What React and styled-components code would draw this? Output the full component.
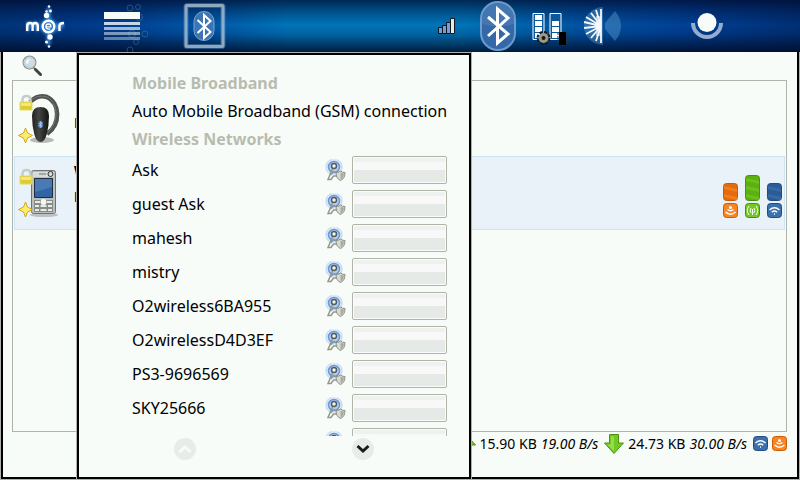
import { useState } from 'react';
import styled, { createGlobalStyle } from 'styled-components';

const GlobalStyle = createGlobalStyle`
  * {
    box-sizing: border-box;
  }
  body {
    margin: 0;
    background: #f8fcf8;
    color: #000;
    font-family: 'Noto Sans', 'Open Sans', sans-serif;
    font-size: 16px;
  }
  svg {
    display: block;
    flex: none;
  }
`;

const Screen = styled.div`
  display: flex;
  flex-direction: column;
  height: 100vh;
  overflow: hidden;
`;

const Toolbar = styled.header`
  display: flex;
  align-items: center;
  gap: 39px;
  height: 52px;
  flex: none;
  padding: 0 53px 0 5px;
  background:
    linear-gradient(
      rgba(0, 8, 40, 0.7),
      rgba(0, 12, 48, 0.3) 25%,
      transparent 48%,
      rgba(0, 12, 48, 0.15) 65%,
      rgba(0, 8, 32, 0.8)
    ),
    linear-gradient(
      90deg,
      #003478,
      #003e90 14%,
      #0058a8 26%,
      #0074b8 36%,
      #0074b8 58%,
      #0054a4 72%,
      #004094 86%,
      #003074
    );
`;

const ToolGroup = styled.nav`
  display: flex;
  margin-left: ${({ $end }) => ($end ? 'auto' : '0')};
`;

const ToolButton = styled.button`
  display: flex;
  align-items: center;
  justify-content: center;
  width: ${({ $wide }) => ($wide ? '80px' : '52px')};
  height: 52px;
  padding: 0;
  border: 0;
  background: none;
`;

const Desktop = styled.div`
  position: relative;
  display: flex;
  flex: 1;
  min-height: 0;
  padding: 0 1px 1px;
  background: #b0b0b0;
`;

const Window = styled.main`
  display: flex;
  flex-direction: column;
  flex: 1;
  min-width: 0;
  padding: 0 10px 0 9px;
  border: solid #000;
  border-width: 0 2px 2px;
  background: #f8fcf8;
`;

const SearchButton = styled.button`
  align-self: flex-start;
  height: 28px;
  padding: 2px 10px;
  border: 0;
  background: none;
`;

const DeviceList = styled.ul`
  flex: 1;
  min-height: 0;
  margin: 0;
  padding: 1px;
  border: 1px solid #b0b4a8;
  list-style: none;
`;

const Device = styled.li`
  display: flex;
  align-items: center;
  height: 74px;
  padding: 0 2px 0 3px;
  border: 1px solid ${({ $selected }) => ($selected ? '#cce4f4' : 'transparent')};
  background: ${({ $selected }) => ($selected ? '#e8f2f8' : 'none')};
`;

const DeviceText = styled.div`
  flex: 1;
  padding: 0 0 18px 12px;
  font-size: 14px;
  font-weight: bold;
  line-height: 26px;

  p {
    height: 26px;
    margin: 0;
  }
`;

const Meters = styled.div`
  display: flex;
  align-items: flex-end;
  gap: 7px;
  padding-top: 6px;
`;

const Meter = styled.div`
  display: flex;
  flex-direction: column;
  align-items: center;
  gap: 2px;
`;

const StatusBar = styled.footer`
  display: flex;
  align-items: center;
  justify-content: flex-end;
  gap: 4px;
  height: 45px;
  padding-bottom: 22px;
  flex: none;
  font-size: 14px;
  white-space: nowrap;

  em {
    margin-right: 2px;
  }
`;

const Panel = styled.section`
  position: absolute;
  top: 1px;
  bottom: 1px;
  left: 77px;
  display: flex;
  flex-direction: column;
  width: 394px;
  border: 2px solid #000;
  box-shadow: 0 0 0 1px #b0b0b0;
  background: #f8fcf8;
`;

const PanelBody = styled.div`
  flex: 1;
  min-height: 0;
  padding: 14px 22px 0 53px;
  overflow: hidden;
`;

const PanelTitle = styled.h2`
  margin: 0;
  color: #b8bcb0;
  font-size: 16px;
  line-height: 28px;
`;

const Connection = styled.p`
  margin: 0;
  line-height: 28px;
  white-space: nowrap;
`;

const Network = styled.div`
  display: flex;
  align-items: center;
  gap: 6px;
  height: 34px;

  label {
    flex: 1;
  }
`;

const NetworkButton = styled.button`
  width: 95px;
  height: 28px;
  padding: 0;
  border: 1px solid #b0b4a8;
  border-radius: 2px;
  background: linear-gradient(
    #eef2ee 5px,
    #f8f8f8 5px,
    #f8f8f8 13px,
    #e6eae6 13px
  );
  box-shadow: inset 0 0 0 1px #fcfcfc;
`;

const Pager = styled.div`
  display: grid;
  grid-template-columns: 1fr 1fr;
  justify-items: center;
  height: 41px;
  padding: 2px 17px 0;
  flex: none;
`;

const PagerButton = styled.button`
  display: flex;
  align-items: center;
  justify-content: center;
  width: 22px;
  height: 22px;
  padding: 0;
  border: 0;
  border-radius: 50%;
  background: #e8ece8;
`;

const MerLogo = () => (
  <svg width="40" height="48" viewBox="0 0 40 48" fill="none" stroke="#fff">
    <defs>
      <filter id="glow" x="-50%" y="-50%" width="200%" height="200%">
        <feGaussianBlur stdDeviation="1.5" />
      </filter>
    </defs>
    <g filter="url(#glow)" stroke="#4ca4f4" strokeWidth="4" opacity="0.8">
      <path d="M3 29v-7h9v7M34 29v-6h5M23.500 6v37" />
      <circle cx="23.500" cy="24.500" r="6" />
    </g>
    <g strokeWidth="2.400">
      <path d="M2.200 29v-5q0-3 2.800-3t2.600 3v5M7.600 24q0-3 2.600-3t2.600 3v5" />
      <circle cx="23.500" cy="24.500" r="5.800" />
      <path d="M21 24.800h5q0-2.800-2.500-2.800t-2.700 2.700q0 2.800 4.500 2.300" strokeWidth="1.300" />
      <path d="M34.500 29v-5q0-3 4.500-3" />
    </g>
    <g fill="#fff" stroke="none">
      <circle cx="24" cy="4.500" r="1.300" />
      <circle cx="25.500" cy="9" r="1.400" />
      <circle cx="21.500" cy="9.500" r="1.200" />
      <circle cx="21.500" cy="13.500" r="2.700" />
      <circle cx="25" cy="35" r="2.700" />
      <circle cx="21.500" cy="40" r="1.500" />
      <circle cx="24" cy="44.500" r="1.300" />
    </g>
  </svg>
);

const BubbleMenu = () => (
  <svg width="52" height="52" viewBox="0 0 52 52">
    <g fill="none" stroke="#6c8c98" opacity="0.4">
      <circle cx="31" cy="8" r="3" />
      <circle cx="39" cy="7" r="2.500" />
      <circle cx="40" cy="17" r="3.500" />
      <circle cx="33" cy="34" r="3.500" />
      <circle cx="46" cy="34" r="3" />
      <circle cx="37" cy="42" r="2.500" />
      <circle cx="31" cy="50" r="3" />
    </g>
    <g fill="#f8fcf8">
      <path d="M5 12h36v7H5z" />
      <path d="M5 22h36v3H5z" opacity="0.8" />
      <path d="M5 27h36v3H5z" opacity="0.65" />
      <path d="M5 32h36v3H5z" opacity="0.5" />
      <path d="M5 37h36v3H5z" opacity="0.4" />
    </g>
  </svg>
);

const BluetoothFrame = () => (
  <svg width="44" height="48" viewBox="0 0 44 48" fill="none">
    <rect x="3" y="3.500" width="37" height="41" rx="1" stroke="#6ca0d0" strokeWidth="5" opacity="0.4" />
    <rect x="3" y="3.500" width="37" height="41" rx="1" stroke="#a8bccc" strokeWidth="3" opacity="0.8" />
    <rect x="11" y="9.500" width="20" height="29" rx="10" fill="#3c74b4" stroke="#78a4d0" />
    <path d="M14.500 18l13 12-6.500 6V13l6.500 6-13 12" stroke="#fff" strokeWidth="2" />
  </svg>
);

const SignalBars = () => (
  <svg width="17" height="18" viewBox="0 0 17 18" fill="#7c9cd0" stroke="#101820">
    <path d="M.5 10.500h4v6h-4zM4.500 8.500h4v8h-4zM8.500 5.500h4v11h-4z" />
    <path d="M12.500 1.500h4v15h-4z" fill="#e8ece8" />
  </svg>
);

const BluetoothBadge = () => (
  <svg width="36" height="50" viewBox="0 0 36 50" fill="none">
    <rect x="1" y="1" width="34" height="48" rx="17" fill="#3468a8" stroke="#6c9ccc" strokeWidth="2" />
    <path d="M2 23V18a16 16 0 0 1 32 0v5q-16 5-32 0z" fill="#5484bc" opacity="0.5" />
    <path d="M8 16l20 17-10.500 9V8L28 17 8 35" stroke="#fff" strokeWidth="3" />
  </svg>
);

const LoadMeters = () => (
  <svg width="38" height="38" viewBox="0 0 38 38">
    <path d="M2 6.500h11v26H2zM19 6.500h11v26H19z" fill="#0c589c" stroke="#fff" />
    <path
      d="M4 8h7v5H4zM4 14h7v5H4zM4 20h7v5H4zM4 26h7v5H4zM21 14h7v5h-7zM21 20h7v5h-7zM21 26h7v5h-7z"
      fill="#fff"
    />
    <circle cx="12.500" cy="31" r="5" fill="none" stroke="#181818" strokeWidth="4" strokeDasharray="2.600 1.300" />
    <circle cx="12.500" cy="31" r="3.500" fill="#181818" stroke="#9c988c" strokeWidth="3" />
    <path d="M26 27h12M26 30h12M26 33h12M26 36h12" stroke="#303430" />
    <path d="M28 25h7v13h-7z" fill="#000" />
  </svg>
);

const Brightness = () => (
  <svg width="38" height="40" viewBox="0 0 38 40">
    <path d="M20 1A19 19 0 0 0 20 39z" fill="#78b0d8" opacity="0.35" />
    <path
      d="M18 20V3M18 20L13 4M18 20L8 7M18 20L3 11M18 20L1 16M18 20L1 22M18 20L3 28M18 20L8 32M18 20L13 35M18 20v17"
      stroke="#f4f8fc"
      strokeWidth="1.800"
    />
    <path d="M13 10h5v20h-5z" fill="#f8fcf8" opacity="0.6" />
    <path d="M22 17L32 5q6 7 6 15t-6 15L22 23z" fill="#5c98cc" opacity="0.45" />
  </svg>
);

const Presence = () => (
  <svg width="32" height="28" viewBox="0 0 32 28" fill="none">
    <path d="M2 11a14 14 0 0 0 28 0" stroke="#94acd0" strokeWidth="4" />
    <circle cx="16" cy="10.500" r="9.500" fill="#f8fcf8" />
  </svg>
);

const Magnifier = () => (
  <svg width="20" height="22" viewBox="0 0 20 22" fill="none">
    <path d="M11 12l3 3" stroke="#888c88" strokeWidth="2" />
    <path d="M13.500 14.500l5 5" stroke="#404440" strokeWidth="3" strokeLinecap="round" />
    <circle cx="7.500" cy="7.500" r="6" fill="#c8dcec" stroke="#888c88" strokeWidth="2" />
    <circle cx="7.500" cy="7.500" r="5.500" stroke="#e8ece8" />
    <path d="M4 8q0-4 5-4-3 1-3 5z" fill="#fff" />
  </svg>
);

const DeviceMarks = () => (
  <>
    <path d="M4.500 12V9q0-4 4-4t4 4v3" fill="none" stroke="#c8ccc8" strokeWidth="2.500" />
    <path d="M2 11h12v8H2z" fill="#dccc30" stroke="#e4d870" />
    <path d="M3 12h10v3H3z" fill="#f4e878" />
    <path
      d="M7.500 37l2 5 5 2.500-5 2.500-2 5-2-5-5-2.500 5-2.500z"
      fill="#fcec70"
      stroke="#d0a818"
      strokeLinejoin="round"
    />
  </>
);

const Headset = () => (
  <svg width="44" height="56" viewBox="0 0 44 56">
    <defs>
      <linearGradient id="earpiece">
        <stop offset="0" stopColor="#20201f" />
        <stop offset="0.4" stopColor="#444644" />
        <stop offset="1" stopColor="#101210" />
      </linearGradient>
    </defs>
    <ellipse cx="24" cy="49" rx="12" ry="3" fill="#787878" opacity="0.5" />
    <path
      d="M12 11Q20 3 29 6C42 12 43 33 29 43"
      fill="none"
      stroke="#505450"
      strokeWidth="4.500"
    />
    <path d="M12 10Q20 3 29 6C41 12 41 32 29 42" fill="none" stroke="#747874" />
    <path d="M14 25q0-9 8.500-9t8.500 9q0 10-2.500 19-2 7-6 7t-6-7Q14 35 14 25z" fill="url(#earpiece)" />
    <ellipse cx="22.500" cy="33.500" rx="2.500" ry="3.500" fill="#5484c0" />
    <path d="M21 32l3 3-1.500 1.500v-6L24 32l-3 3" fill="none" stroke="#c8dcf0" strokeWidth="0.600" />
    <DeviceMarks />
  </svg>
);

const Phone = () => (
  <svg width="44" height="56" viewBox="0 0 44 56">
    <ellipse cx="26" cy="50" rx="14" ry="2" fill="#787878" opacity="0.4" />
    <rect x="13.500" y="5.500" width="24" height="43" rx="2" fill="#bcc0bc" stroke="#707470" />
    <path d="M15 7h21v5H15z" fill="#d8dcd8" />
    <path d="M21 9h7" stroke="#707470" />
    <circle cx="32.500" cy="9" r="2.500" fill="#d8dcd8" stroke="#303430" />
    <path d="M16.500 13.500h18v19h-18z" fill="#3064a4" stroke="#202c40" />
    <path d="M17 14h17v8L17 27z" fill="#6490c4" opacity="0.5" />
    <path d="M16 35h19v12H16z" fill="#888c88" />
    <path
      d="M17 36h5v2h-5zM29 36h5v2h-5zM17 40h4v2h-4zM22.500 40h6v2h-6zM30 40h4v2h-4zM17 44h4v2h-4zM22.500 44h6v2h-6zM30 44h4v2h-4z"
      fill="#e8ece8"
    />
    <circle cx="25.500" cy="37" r="3" fill="#f4f8f4" />
    <DeviceMarks />
  </svg>
);

const colors = {
  orange: ['#e46c0c', '#f88424', '#c85c04'],
  green: ['#5cb010', '#74c824', '#48900c'],
  blue: ['#2c5c98', '#3c70ac', '#204c84'],
};

const Bar = ({ color, height }) => (
  <svg width="15" height={height} viewBox={`0 0 15 ${height}`}>
    <rect x="0.500" y="0.500" width="14" height={height - 1} rx="3" fill={colors[color][0]} stroke={colors[color][2]} />
    {[6, 14, 22].filter(y => y < height - 3).map(y => (
      <path key={y} d={`M1 ${y - 3}l13 3v3l-13-3z`} fill={colors[color][1]} opacity="0.7" />
    ))}
  </svg>
);

const Badge = ({ color }) => (
  <svg width="15" height="15" viewBox="0 0 15 15" fill="none" stroke="#fff">
    <rect x="0.500" y="0.500" width="14" height="14" rx="3" fill={colors[color][1]} stroke={colors[color][2]} />
    {color === 'blue' && (
      <path d="M2.500 7q5-4.500 10 0M4.800 9.200q2.700-2.400 5.400 0M7 11h1" strokeWidth="1.400" />
    )}
    {color === 'orange' && (
      <>
        <circle cx="7.500" cy="4.500" r="1.500" fill="#fff" stroke="none" />
        <path d="M4.500 6.500q3 2.500 6 0M2.500 9q5 4.500 10 0" strokeWidth="1.400" />
      </>
    )}
    {color === 'green' && (
      <path d="M4 3q-3.500 4.500 0 9M11 3q3.500 4.500 0 9M6 5q-1.500 2.500 0 5M9 5q1.500 2.500 0 5M7.500 6v6" />
    )}
  </svg>
);

const Arrow = ({ up }) => (
  <svg width="20" height="20" viewBox="0 0 20 20">
    <path
      d="M5.500.5h9V9h5L10 19.500.5 9h5z"
      fill="#74c824"
      stroke="#4c9410"
      transform={up ? 'rotate(180 10 10)' : undefined}
    />
    {!up && <path d="M7 2.500h3V17L3.500 10.500H7z" fill="#b0e868" opacity="0.6" />}
  </svg>
);

const SecureAccessPoint = () => (
  <svg width="21" height="22" viewBox="0 0 21 22" fill="none">
    <circle cx="9" cy="8" r="8" fill="#dce8f8" stroke="#bcd4f0" strokeDasharray="19 6.130" strokeDashoffset="-15.700" />
    <circle cx="9" cy="8" r="5.500" fill="#b8d0f0" stroke="#6898d8" strokeWidth="1.500" />
    <path d="M7.500 10L3 20.500h3L8.500 17H12M5.500 16l4-4" stroke="#94988c" strokeWidth="1.500" />
    <circle cx="9" cy="7" r="2.500" fill="#f0f4f0" stroke="#585c58" strokeWidth="1.500" />
    <path d="M11 13.500q3 0 4.500-1.500 1.500 1.500 4.500 1.500 0 6-4.500 8-4.500-2-4.500-8z" fill="#d8dcd4" stroke="#888c80" />
    <path d="M15.500 13.500v7q3.300-2 3.500-6-2 0-3.500-1z" fill="#a8aca0" />
  </svg>
);

const Chevron = ({ up }) => (
  <svg width="14" height="10" viewBox="0 0 14 10" fill="none">
    <path d={up ? 'M1.500 8L7 3l5.500 5' : 'M1.500 2L7 7l5.500-5'} stroke={up ? '#f8fcf8' : '#181c18'} strokeWidth="3" />
  </svg>
);

const networks = [
  'Ask',
  'guest Ask',
  'mahesh',
  'mistry',
  'O2wireless6BA955',
  'O2wirelessD4D3EF',
  'PS3-9696569',
  'SKY25666',
  'TalkTalk',
];

const tools = [
  ['Signal', SignalBars],
  ['Bluetooth', BluetoothBadge],
  ['System load', LoadMeters],
  ['Brightness', Brightness],
];

const App = () => {
  const [connected, setConnected] = useState(null);

  return (
    <Screen>
      <GlobalStyle />
      <Toolbar>
        <ToolGroup>
          <ToolButton $wide aria-label="Mer">
            <MerLogo />
          </ToolButton>
          <ToolButton $wide aria-label="Menu">
            <BubbleMenu />
          </ToolButton>
          <ToolButton $wide aria-label="Bluetooth window">
            <BluetoothFrame />
          </ToolButton>
        </ToolGroup>
        <ToolGroup $end>
          {tools.map(([name, Icon]) => (
            <ToolButton key={name} aria-label={name}>
              <Icon />
            </ToolButton>
          ))}
        </ToolGroup>
        <ToolGroup>
          <ToolButton $wide aria-label="Presence">
            <Presence />
          </ToolButton>
        </ToolGroup>
      </Toolbar>
      <Desktop>
        <Window>
          <SearchButton aria-label="Search">
            <Magnifier />
          </SearchButton>
          <DeviceList>
            <Device>
              <Headset />
              <DeviceText>
                <p />
                Headset
              </DeviceText>
            </Device>
            <Device $selected>
              <Phone />
              <DeviceText>
                <p>W</p>
                Phone
              </DeviceText>
              <Meters>
                <Meter>
                  <Bar color="orange" height={18} />
                  <Badge color="orange" />
                </Meter>
                <Meter>
                  <Bar color="green" height={26} />
                  <Badge color="green" />
                </Meter>
                <Meter>
                  <Bar color="blue" height={18} />
                  <Badge color="blue" />
                </Meter>
              </Meters>
            </Device>
          </DeviceList>
          <StatusBar>
            <Arrow up />
            <span>15.90 KB</span>
            <em>19.00 B/s</em>
            <Arrow />
            <span>24.73 KB</span>
            <em>30.00 B/s</em>
            <Badge color="blue" />
            <Badge color="orange" />
          </StatusBar>
        </Window>
        <Panel>
          <PanelBody>
            <PanelTitle>Mobile Broadband</PanelTitle>
            <Connection>Auto Mobile Broadband (GSM) connection</Connection>
            <PanelTitle>Wireless Networks</PanelTitle>
            {networks.map(name => (
              <Network key={name}>
                <label htmlFor={name}>{name}</label>
                <SecureAccessPoint />
                <NetworkButton
                  id={name}
                  aria-pressed={connected === name}
                  onClick={() => setConnected(name)}
                />
              </Network>
            ))}
          </PanelBody>
          <Pager>
            <PagerButton aria-label="Scroll up" disabled>
              <Chevron up />
            </PagerButton>
            <PagerButton aria-label="Scroll down">
              <Chevron />
            </PagerButton>
          </Pager>
        </Panel>
      </Desktop>
    </Screen>
  );
};

export default App;
